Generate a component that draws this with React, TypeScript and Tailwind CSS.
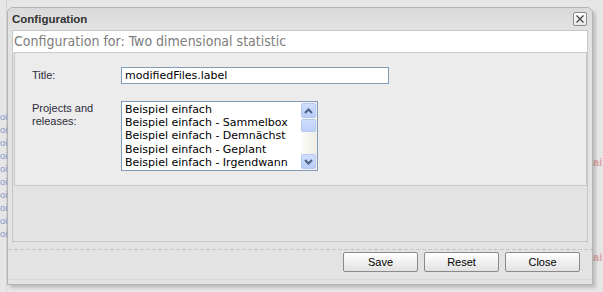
const listItems = [
  "Beispiel einfach",
  "Beispiel einfach - Sammelbox",
  "Beispiel einfach - Demnächst",
  "Beispiel einfach - Geplant",
  "Beispiel einfach - Irgendwann",
];

function Chevron({ up }: { up?: boolean }) {
  return (
    <svg width="9" height="6" viewBox="0 0 9 6" className="block">
      <path
        d={up ? "M1 5 L4.5 1.5 L8 5" : "M1 1 L4.5 4.5 L8 1"}
        fill="none"
        stroke="#4d6185"
        strokeWidth="2"
      />
    </svg>
  );
}

function ScrollButton({ up }: { up?: boolean }) {
  return (
    <div className="flex h-[15px] w-[15px] items-center justify-center rounded-[2px] border border-[#b4c8f6] bg-gradient-to-b from-[#d2defc] to-[#b6cbf8]">
      <Chevron up={up} />
    </div>
  );
}

function DialogButton({ label }: { label: string }) {
  return (
    <button className="flex h-[20px] w-[75px] items-center justify-center rounded-[2px] border border-[#8a8a8a] bg-gradient-to-b from-white to-[#e2e2e2] text-[11px] leading-none text-black">
      {label}
    </button>
  );
}

export default function App() {
  const rows = Array.from({ length: 10 });
  return (
    <div className="relative h-[292px] w-[603px] overflow-hidden bg-[#e6e6e6] font-['Liberation_Sans',Arial,sans-serif]">
      {/* page behind the modal */}
      <div className="flex h-full">
        <div className="flex w-[7px] flex-col border-r border-[#d2d2d2] pt-[110px]">
          {rows.map((_, i) => (
            <div key={i} className="h-[13px] whitespace-nowrap text-[9.5px] leading-[13px] text-[#8396cc]">
              oi
            </div>
          ))}
        </div>
        <div className="flex-1" />
        <div className="flex w-[16px] flex-col pt-[154px]">
          <div className="whitespace-nowrap text-[11px] font-bold leading-[16px] text-[#dca4a4]">vai</div>
          <div className="mt-[79px] whitespace-nowrap text-[11px] font-bold leading-[16px] text-[#dca4a4]">vai</div>
        </div>
      </div>

      {/* modal dialog */}
      <div className="absolute left-[7px] top-[7px] flex h-[278px] w-[586px] flex-col rounded-t-[6px] border border-[#b3b3b3] bg-[#e3e3e3] shadow-[3px_3px_3px_rgba(0,0,0,0.16)]">
        <div className="flex h-[22px] justify-between rounded-t-[5px] bg-gradient-to-b from-[#dadada] to-[#e2e2e2] pl-[4px] pr-[5px]">
          <span className="pt-[5px] text-[11.5px] font-bold leading-[13px] text-[#333]">Configuration</span>
          <div className="mt-[4px] flex h-[14px] w-[14px] items-center justify-center rounded-[2px] border border-[#8c8c8c] bg-gradient-to-b from-white to-[#e8e8e8]">
            <svg width="8" height="8" viewBox="0 0 8 8">
              <path d="M0.5 0.5 L7.5 7.5 M7.5 0.5 L0.5 7.5" stroke="#444" strokeWidth="1.3" />
            </svg>
          </div>
        </div>

        <div className="mx-[4px] flex h-[212px] flex-col border border-[#c6c6c6] bg-[#e3e3e3]">
          <div className="h-[21px] bg-white pl-[1px] font-['DejaVu_Sans_Condensed','DejaVu_Sans',sans-serif] text-[14px] leading-[21px] text-[#7d7d7d]">
            Configuration for: Two dimensional statistic
          </div>
          <div className="ml-[1px] flex h-[134px] flex-col border border-[#c9c9c9] bg-[#ececec] pl-[17px] pt-[14px]">
            <div className="flex items-center">
              <label className="w-[89px] text-[11px] text-[#2d2d3c]">Title:</label>
              <div className="h-[17px] w-[268px] border border-[#7f9db9] bg-white pl-[3px] font-['DejaVu_Sans',sans-serif] text-[11px] leading-[15px] text-black">
                modifiedFiles.label
              </div>
            </div>
            <div className="mt-[17px] flex items-start">
              <label className="w-[89px] pt-[1px] text-[11px] leading-[13px] text-[#2d2d3c]">
                Projects and
                <br />
                releases:
              </label>
              <div className="flex h-[70px] w-[197px] border border-[#7f9db9] bg-white">
                <div className="flex-1 overflow-hidden pl-[3px] pt-[1px] font-['DejaVu_Sans',sans-serif] text-[11px] leading-[13.2px] text-black">
                  {listItems.map((item) => (
                    <div key={item} className="whitespace-nowrap">{item}</div>
                  ))}
                </div>
                <div className="flex w-[16px] flex-col bg-gradient-to-r from-[#fbfbf8] to-[#eeede5] py-[1px]">
                  <ScrollButton up />
                  <div className="mt-[1px] h-[13px] w-[15px] rounded-[2px] border border-[#b4c8f6] bg-gradient-to-b from-[#cfdcfc] to-[#bccff8]" />
                  <div className="flex-1" />
                  <ScrollButton />
                </div>
              </div>
            </div>
          </div>
        </div>

        <div className="mt-[7px] h-[1px] bg-[repeating-linear-gradient(90deg,#c6c6c6_0_4px,transparent_4px_6px)]" />
        <div className="mt-[2px] flex justify-end gap-[6px] pr-[12px]">
          <DialogButton label="Save" />
          <DialogButton label="Reset" />
          <DialogButton label="Close" />
        </div>
        <div className="mt-[7px] h-[1px] bg-[#d6d6d6]" />
      </div>
    </div>
  );
}
